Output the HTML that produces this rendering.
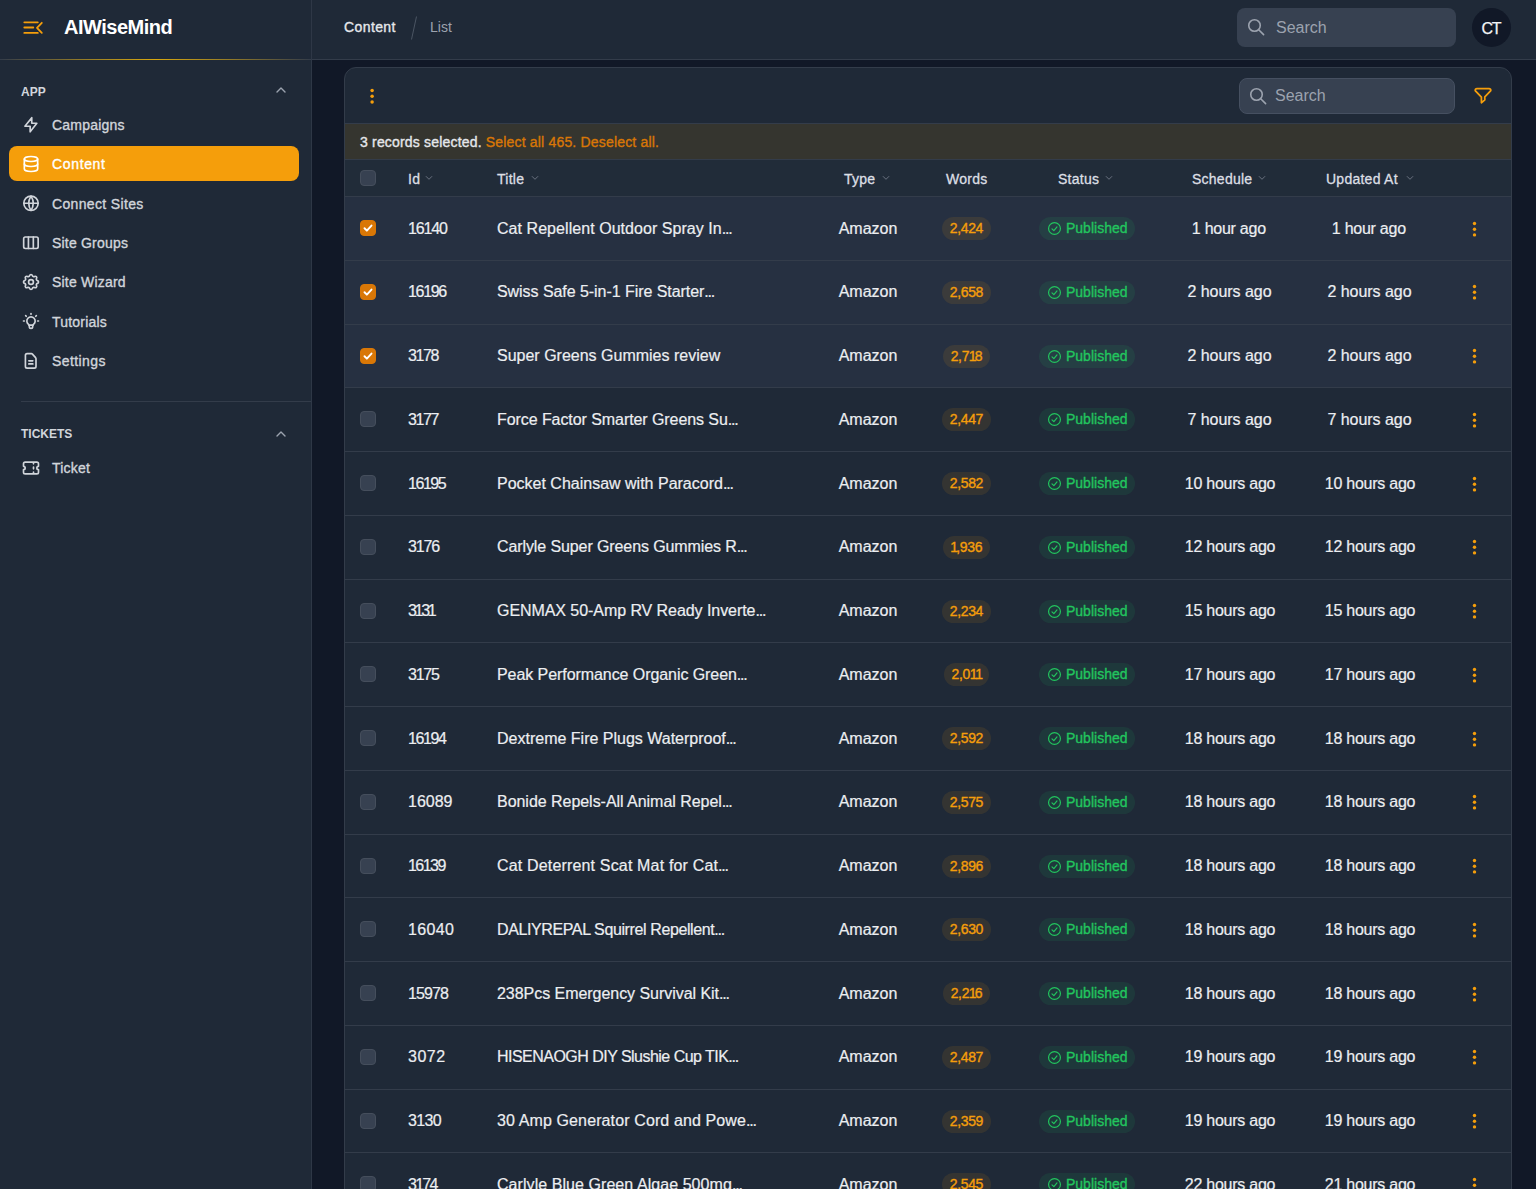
<!DOCTYPE html><html><head><meta charset="utf-8"><style>*{box-sizing:border-box;margin:0;padding:0}
html,body{width:1536px;height:1189px;overflow:hidden;background:#111827;font-family:"Liberation Sans",sans-serif;color:#f3f4f6}
.abs{position:absolute}
#sb{position:absolute;left:0;top:0;width:312px;height:1189px;background:#1f2937;border-right:1px solid #2e3746}
#sbh{position:absolute;left:0;top:0;width:311px;height:60px;border-bottom:1px solid #333c4a}
#sbh .grad{position:absolute;left:0;top:59px;width:311px;height:1px;background:linear-gradient(90deg,rgba(234,179,8,0) 0%,rgba(234,179,8,0.5) 25%,rgba(234,179,8,0.9) 50%,rgba(234,179,8,0.5) 75%,rgba(234,179,8,0) 100%)}
.logo{position:absolute;left:64px;top:14px;height:26px;line-height:26px;font-size:20px;font-weight:700;color:#fff;letter-spacing:-0.5px}
.grp{position:absolute;left:21px;font-size:12px;font-weight:700;color:#d1d5db;height:16px;line-height:16px;letter-spacing:0}
.chev{position:absolute;left:276px;width:10px;height:6px}
.nav{position:absolute;left:9px;width:290px;height:35px;border-radius:8px;color:#d1d5db}
.nav svg{position:absolute;left:12px;top:7.5px;width:20px;height:20px}
.nav span{position:absolute;left:43px;top:1px;height:35px;line-height:35px;font-size:14px;font-weight:400;letter-spacing:0.2px;-webkit-text-stroke:0.35px currentColor}
.nav.act{background:#f59e0b;color:#fff}
#top{position:absolute;left:312px;top:0;width:1224px;height:60px;background:#1f2937;border-bottom:1px solid #333c4a}
.bc{position:absolute;top:17px;height:20px;line-height:20px;font-size:14px}
.search{position:absolute;border-radius:8px;background:#374151}
.search svg{position:absolute}
.search span{position:absolute;font-size:16px;color:#9ca3af}
#card{position:absolute;left:344px;top:67px;width:1168px;height:1200px;background:#1f2937;border:1px solid #333c4a;border-radius:12px;overflow:hidden}
#selbar{position:absolute;left:0;top:55px;width:1166px;height:36px;background:#35352f;border-top:1px solid #333c4a}
#selbar span{position:absolute;left:15px;top:8px;height:20px;line-height:20px;font-size:14px;letter-spacing:0.18px;-webkit-text-stroke:0.35px currentColor}
#selbar b{font-weight:400}
#thead{position:absolute;left:0;top:91px;width:1166px;height:37px;background:#212c39;border-top:1px solid #333c4a}
.th{position:absolute;top:0.5px;height:36px;line-height:36px;font-size:14px;font-weight:400;-webkit-text-stroke:0.3px currentColor;letter-spacing:0.25px;color:#dcdfe4}
.cb{position:absolute;left:15px;width:16px;height:16px;border-radius:4px;background:#374151;border:1px solid #454e5c}
.cb.on{background:#d97706;border-color:#d97706}
.row{position:absolute;left:0;width:1166px;height:64.75px;border-top:1px solid #333c4a}
.row.sel{background:#263041}
.td{position:absolute;top:-0.5px;height:63px;line-height:63px;font-size:16px;color:#eceef1;white-space:nowrap;-webkit-text-stroke:0.2px currentColor}
.td.c{text-align:center}
.badge{position:absolute;top:20px;height:23px;line-height:23px;border-radius:12px;font-size:14px;text-align:center;-webkit-text-stroke:0.35px currentColor}
.bw{position:relative;top:0;display:inline-block;padding:0 8px;letter-spacing:-0.35px;background:rgba(245,158,11,0.1);color:#f59e0b}
.bs{background:rgba(34,197,94,0.1);color:#22c55e;text-align:left}

.ell{letter-spacing:-1.2px}

.n1{letter-spacing:-1.9px;margin-left:-0.3px}
</style></head><body>
<div id="sb"><div id="sbh"><div class="grad"></div>
<svg class="abs" style="left:20px;top:18px" width="26" height="20" viewBox="0 0 26 20" fill="none" stroke="#f59e0b" stroke-width="1.8" stroke-linecap="round" stroke-linejoin="round"><path d="M4.3 4.3h13.5M4.3 9.5h9M4.3 14.9h13.5M21.8 4.8l-4.8 5 4.8 5"/></svg>
<div class="logo">AIWiseMind</div></div>
<div class="grp" style="top:84px">APP</div>
<svg class="chev" style="top:87px" viewBox="0 0 10 6" fill="none" stroke="#9ca3af" stroke-width="1.4" stroke-linecap="round" stroke-linejoin="round"><path d="M1 5l4-4 4 4"/></svg>
<div class="nav" style="top:107.00px"><svg viewBox="0 0 24 24" fill="none" stroke="currentColor" stroke-width="2" stroke-linecap="round" stroke-linejoin="round"><path d="M12.9 3.2V9.9H19L11 20.2V13.5H4.7L12.9 3.2Z"/></svg><span>Campaigns</span></div>
<div class="nav act" style="top:146.37px"><svg viewBox="0 0 24 24" fill="none" stroke="currentColor" stroke-width="2" stroke-linecap="round" stroke-linejoin="round"><ellipse cx="12" cy="6" rx="8" ry="3"/><path d="M4 6v6a8 3 0 0 0 16 0V6"/><path d="M4 12v6a8 3 0 0 0 16 0v-6"/></svg><span style="letter-spacing:0.65px">Content</span></div>
<div class="nav" style="top:185.74px"><svg viewBox="0 0 24 24" fill="none" stroke="currentColor" stroke-width="2" stroke-linecap="round" stroke-linejoin="round"><circle cx="12" cy="12.3" r="8.6"/><path d="M12 3.7a16 16 0 0 0 0 17.2a16 16 0 0 0 0-17.2"/><path d="M3.4 12.3h17.2"/></svg><span style="letter-spacing:0.35px">Connect Sites</span></div>
<div class="nav" style="top:225.11px"><svg viewBox="0 0 24 24" fill="none" stroke="currentColor" stroke-width="2" stroke-linecap="round" stroke-linejoin="round"><rect x="3.2" y="4.8" width="17.4" height="13.8" rx="2"/><path d="M8.9 4.8v13.8M14.8 4.8v13.8"/></svg><span>Site Groups</span></div>
<div class="nav" style="top:264.48px"><svg viewBox="0 0 24 24" fill="none" stroke="currentColor" stroke-width="2" stroke-linecap="round" stroke-linejoin="round"><path d="M10.325 4.317c.426-1.756 2.924-1.756 3.35 0a1.724 1.724 0 0 0 2.573 1.066c1.543-.94 3.31.826 2.37 2.37a1.724 1.724 0 0 0 1.065 2.572c1.756.426 1.756 2.924 0 3.35a1.724 1.724 0 0 0-1.066 2.573c.94 1.543-.826 3.31-2.37 2.37a1.724 1.724 0 0 0-2.572 1.065c-.426 1.756-2.924 1.756-3.35 0a1.724 1.724 0 0 0-2.573-1.066c-1.543.94-3.31-.826-2.37-2.37a1.724 1.724 0 0 0-1.065-2.572c-1.756-.426-1.756-2.924 0-3.35a1.724 1.724 0 0 0 1.066-2.573c-.94-1.543.826-3.31 2.37-2.37c1 .608 2.296.07 2.572-1.065z"/><circle cx="12" cy="12" r="2.9"/></svg><span>Site Wizard</span></div>
<div class="nav" style="top:303.85px"><svg viewBox="0 0 24 24" fill="none" stroke="currentColor" stroke-width="2" stroke-linecap="round" stroke-linejoin="round"><path d="M3 12h1m8-9v1m8 8h1M5.6 5.6l.7.7m12.1-.7l-.7.7"/><path d="M9 16a5 5 0 1 1 6 0a3.5 3.5 0 0 0-1 3a2 2 0 0 1-4 0a3.5 3.5 0 0 0-1-3"/><path d="M9.7 17h4.6"/></svg><span>Tutorials</span></div>
<div class="nav" style="top:343.22px"><svg viewBox="0 0 24 24" fill="none" stroke="currentColor" stroke-width="2" stroke-linecap="round" stroke-linejoin="round"><path d="M7.3 3.2H12.6Q13.2 3.2 13.7 3.7L17.5 8Q18 8.6 18 9.2V18.6a2 2 0 0 1-2 2H7.3a2 2 0 0 1-2-2V5.2a2 2 0 0 1 2-2z"/><path d="M9.4 11.8h4.8M9.4 15.5h4.8"/></svg><span style="letter-spacing:0.4px">Settings</span></div>
<div class="abs" style="left:21px;top:401px;width:290px;height:1px;background:#333c4a"></div>
<div class="grp" style="top:426px">TICKETS</div>
<svg class="chev" style="top:431px" viewBox="0 0 10 6" fill="none" stroke="#9ca3af" stroke-width="1.4" stroke-linecap="round" stroke-linejoin="round"><path d="M1 5l4-4 4 4"/></svg>
<div class="nav" style="top:450px"><svg viewBox="0 0 24 24" fill="none" stroke="currentColor" stroke-width="2" stroke-linecap="round" stroke-linejoin="round"><path d="M15 5v2M15 11v2M15 17v2M5 5h14a2 2 0 0 1 2 2v3a2 2 0 0 0 0 4v3a2 2 0 0 1-2 2H5a2 2 0 0 1-2-2v-3a2 2 0 0 0 0-4V7a2 2 0 0 1 2-2"/></svg><span>Ticket</span></div>
</div>
<div id="top">
<div class="bc" style="left:32px;color:#e5e7eb;-webkit-text-stroke:0.35px #e5e7eb;letter-spacing:0.4px">Content</div>
<svg class="abs" style="left:98px;top:16px" width="8" height="24"><path d="M6.5 0.5L1.5 23.5" stroke="#4b5563" stroke-width="1"/></svg>
<div class="bc" style="left:118px;color:#9ca3af">List</div>
<div class="search" style="left:925px;top:8px;width:219px;height:39px"><svg style="left:9px;top:9.3px" viewBox="0 0 20 20" width="20" height="20" fill="none" stroke="#9ca3af" stroke-width="1.6" stroke-linecap="round"><circle cx="8.5" cy="8.5" r="5.75"/><path d="M12.7 12.7L17.6 17.6"/></svg><span style="left:39px;top:10px;line-height:20px">Search</span></div>
<div class="abs" style="left:1160px;top:8.4px;width:39px;height:39px;border-radius:50%;background:#111827;color:#f3f4f6;font-size:16px;line-height:41px;text-align:center;letter-spacing:-1.2px;text-indent:-1.2px;-webkit-text-stroke:0.25px #f3f4f6">CT</div>
</div>
<div id="card">
<svg class="abs" style="left:24px;top:19.5px" width="6" height="17" viewBox="0 0 6 17" fill="#f59e0b"><circle cx="3.1" cy="2.5" r="1.75"/><circle cx="3.1" cy="8.2" r="1.75"/><circle cx="3.1" cy="13.9" r="1.75"/></svg>
<div class="search" style="left:894px;top:10px;width:216px;height:36px;border:1px solid #465061"><svg style="left:7.5px;top:7px" viewBox="0 0 20 20" width="20" height="20" fill="none" stroke="#9ca3af" stroke-width="1.6" stroke-linecap="round"><circle cx="8.5" cy="8.5" r="5.75"/><path d="M12.7 12.7L17.6 17.6"/></svg><span style="left:35px;top:7px;line-height:20px">Search</span></div>
<svg class="abs" style="left:1123px;top:14px" width="30" height="26" viewBox="0 0 30 26" fill="none" stroke="#f59e0b" stroke-width="1.75" stroke-linecap="round" stroke-linejoin="round"><path d="M9 6.6H21Q22.8 6.6 22.8 8.4V8.6L16.8 14.9V17.9L13.4 20.8V15.2L7.2 8.6V8.4Q7.2 6.6 9 6.6Z"/></svg>
<div id="selbar"><span><b style="color:#e5e7eb">3 records selected.</b> <b style="color:#d97706">Select all 465.</b> <b style="color:#d97706">Deselect all.</b></span></div>
<div id="thead">
<div class="cb" style="top:10px"></div>
<div class="th" style="left:63px">Id</div>
<svg class="abs" style="left:80px;top:15px" width="8" height="6" viewBox="0 0 8 6" fill="none" stroke="#6b7280" stroke-width="1" stroke-linecap="round" stroke-linejoin="round"><path d="M1.2 1.5l2.8 2.8 2.8-2.8"/></svg>
<div class="th" style="left:152px">Title</div>
<svg class="abs" style="left:185.5px;top:15px" width="8" height="6" viewBox="0 0 8 6" fill="none" stroke="#6b7280" stroke-width="1" stroke-linecap="round" stroke-linejoin="round"><path d="M1.2 1.5l2.8 2.8 2.8-2.8"/></svg>
<div class="th" style="left:499px">Type</div>
<svg class="abs" style="left:537px;top:15px" width="8" height="6" viewBox="0 0 8 6" fill="none" stroke="#6b7280" stroke-width="1" stroke-linecap="round" stroke-linejoin="round"><path d="M1.2 1.5l2.8 2.8 2.8-2.8"/></svg>
<div class="th" style="left:601px">Words</div>
<div class="th" style="left:713px">Status</div>
<svg class="abs" style="left:760.4px;top:15px" width="8" height="6" viewBox="0 0 8 6" fill="none" stroke="#6b7280" stroke-width="1" stroke-linecap="round" stroke-linejoin="round"><path d="M1.2 1.5l2.8 2.8 2.8-2.8"/></svg>
<div class="th" style="left:847px">Schedule</div>
<svg class="abs" style="left:913px;top:15px" width="8" height="6" viewBox="0 0 8 6" fill="none" stroke="#6b7280" stroke-width="1" stroke-linecap="round" stroke-linejoin="round"><path d="M1.2 1.5l2.8 2.8 2.8-2.8"/></svg>
<div class="th" style="left:981px">Updated At</div>
<svg class="abs" style="left:1061px;top:15px" width="8" height="6" viewBox="0 0 8 6" fill="none" stroke="#6b7280" stroke-width="1" stroke-linecap="round" stroke-linejoin="round"><path d="M1.2 1.5l2.8 2.8 2.8-2.8"/></svg>
</div>
<div class="row sel" style="top:128.00px">
<div class="cb on" style="top:23px"><svg viewBox="0 0 16 16" width="14" height="14" style="position:absolute;left:0;top:0" fill="none" stroke="#fff" stroke-width="2.2" stroke-linecap="round" stroke-linejoin="round"><path d="M4 8.3l2.7 2.7L12 5.2"/></svg></div>
<div class="td" style="left:63px;letter-spacing:-1.15px">16140</div>
<div class="td" style="left:152px;letter-spacing:0.053px">Cat Repellent Outdoor Spray In<span class="ell">...</span></div>
<div class="td c" style="left:463px;width:120px">Amazon</div>
<div class="abs" style="left:561.4px;top:20px;width:120px;text-align:center"><span class="badge bw">2,424</span></div>
<div class="badge bs" style="left:694px;width:96px"><svg class="abs" style="left:7.5px;top:4px" width="15" height="15" viewBox="0 0 24 24" fill="none" stroke="#22c55e" stroke-width="1.9" stroke-linecap="round" stroke-linejoin="round"><circle cx="12" cy="12" r="9.5"/><path d="M8 12.5l3 3 5-6"/></svg><span style="position:absolute;left:27px">Published</span></div>
<div class="td c" style="left:823.8px;width:120px;letter-spacing:-0.25px">1 hour ago</div>
<div class="td c" style="left:963.8px;width:120px;letter-spacing:-0.25px">1 hour ago</div>
<svg class="abs" style="left:1127.4px;top:23.5px" width="5" height="17" viewBox="0 0 5 17" fill="#f59e0b"><circle cx="2.5" cy="2.5" r="1.7"/><circle cx="2.5" cy="8.2" r="1.7"/><circle cx="2.5" cy="13.9" r="1.7"/></svg>
</div>
<div class="row sel" style="top:191.75px">
<div class="cb on" style="top:23px"><svg viewBox="0 0 16 16" width="14" height="14" style="position:absolute;left:0;top:0" fill="none" stroke="#fff" stroke-width="2.2" stroke-linecap="round" stroke-linejoin="round"><path d="M4 8.3l2.7 2.7L12 5.2"/></svg></div>
<div class="td" style="left:63px;letter-spacing:-1.325px">16196</div>
<div class="td" style="left:152px;letter-spacing:-0.056px">Swiss Safe 5-in-1 Fire Starter<span class="ell">...</span></div>
<div class="td c" style="left:463px;width:120px">Amazon</div>
<div class="abs" style="left:561.4px;top:20px;width:120px;text-align:center"><span class="badge bw">2,658</span></div>
<div class="badge bs" style="left:694px;width:96px"><svg class="abs" style="left:7.5px;top:4px" width="15" height="15" viewBox="0 0 24 24" fill="none" stroke="#22c55e" stroke-width="1.9" stroke-linecap="round" stroke-linejoin="round"><circle cx="12" cy="12" r="9.5"/><path d="M8 12.5l3 3 5-6"/></svg><span style="position:absolute;left:27px">Published</span></div>
<div class="td c" style="left:824.5px;width:120px;letter-spacing:-0.05px">2 hours ago</div>
<div class="td c" style="left:964.5px;width:120px;letter-spacing:-0.05px">2 hours ago</div>
<svg class="abs" style="left:1127.4px;top:23.5px" width="5" height="17" viewBox="0 0 5 17" fill="#f59e0b"><circle cx="2.5" cy="2.5" r="1.7"/><circle cx="2.5" cy="8.2" r="1.7"/><circle cx="2.5" cy="13.9" r="1.7"/></svg>
</div>
<div class="row sel" style="top:255.50px">
<div class="cb on" style="top:23px"><svg viewBox="0 0 16 16" width="14" height="14" style="position:absolute;left:0;top:0" fill="none" stroke="#fff" stroke-width="2.2" stroke-linecap="round" stroke-linejoin="round"><path d="M4 8.3l2.7 2.7L12 5.2"/></svg></div>
<div class="td" style="left:63px;letter-spacing:-1.4px">3178</div>
<div class="td" style="left:152px;letter-spacing:0.000px">Super Greens Gummies review</div>
<div class="td c" style="left:463px;width:120px">Amazon</div>
<div class="abs" style="left:561.4px;top:20px;width:120px;text-align:center"><span class="badge bw">2,7<span class="n1">1</span>8</span></div>
<div class="badge bs" style="left:694px;width:96px"><svg class="abs" style="left:7.5px;top:4px" width="15" height="15" viewBox="0 0 24 24" fill="none" stroke="#22c55e" stroke-width="1.9" stroke-linecap="round" stroke-linejoin="round"><circle cx="12" cy="12" r="9.5"/><path d="M8 12.5l3 3 5-6"/></svg><span style="position:absolute;left:27px">Published</span></div>
<div class="td c" style="left:824.5px;width:120px;letter-spacing:-0.05px">2 hours ago</div>
<div class="td c" style="left:964.5px;width:120px;letter-spacing:-0.05px">2 hours ago</div>
<svg class="abs" style="left:1127.4px;top:23.5px" width="5" height="17" viewBox="0 0 5 17" fill="#f59e0b"><circle cx="2.5" cy="2.5" r="1.7"/><circle cx="2.5" cy="8.2" r="1.7"/><circle cx="2.5" cy="13.9" r="1.7"/></svg>
</div>
<div class="row" style="top:319.25px">
<div class="cb" style="top:23px"></div>
<div class="td" style="left:63px;letter-spacing:-1.433px">3177</div>
<div class="td" style="left:152px;letter-spacing:-0.072px">Force Factor Smarter Greens Su<span class="ell">...</span></div>
<div class="td c" style="left:463px;width:120px">Amazon</div>
<div class="abs" style="left:561.4px;top:20px;width:120px;text-align:center"><span class="badge bw">2,447</span></div>
<div class="badge bs" style="left:694px;width:96px"><svg class="abs" style="left:7.5px;top:4px" width="15" height="15" viewBox="0 0 24 24" fill="none" stroke="#22c55e" stroke-width="1.9" stroke-linecap="round" stroke-linejoin="round"><circle cx="12" cy="12" r="9.5"/><path d="M8 12.5l3 3 5-6"/></svg><span style="position:absolute;left:27px">Published</span></div>
<div class="td c" style="left:824.5px;width:120px;letter-spacing:-0.05px">7 hours ago</div>
<div class="td c" style="left:964.5px;width:120px;letter-spacing:-0.05px">7 hours ago</div>
<svg class="abs" style="left:1127.4px;top:23.5px" width="5" height="17" viewBox="0 0 5 17" fill="#f59e0b"><circle cx="2.5" cy="2.5" r="1.7"/><circle cx="2.5" cy="8.2" r="1.7"/><circle cx="2.5" cy="13.9" r="1.7"/></svg>
</div>
<div class="row" style="top:383.00px">
<div class="cb" style="top:23px"></div>
<div class="td" style="left:63px;letter-spacing:-1.45px">16195</div>
<div class="td" style="left:152px;letter-spacing:0.000px">Pocket Chainsaw with Paracord<span class="ell">...</span></div>
<div class="td c" style="left:463px;width:120px">Amazon</div>
<div class="abs" style="left:561.4px;top:20px;width:120px;text-align:center"><span class="badge bw">2,582</span></div>
<div class="badge bs" style="left:694px;width:96px"><svg class="abs" style="left:7.5px;top:4px" width="15" height="15" viewBox="0 0 24 24" fill="none" stroke="#22c55e" stroke-width="1.9" stroke-linecap="round" stroke-linejoin="round"><circle cx="12" cy="12" r="9.5"/><path d="M8 12.5l3 3 5-6"/></svg><span style="position:absolute;left:27px">Published</span></div>
<div class="td c" style="left:825px;width:120px;letter-spacing:-0.25px">10 hours ago</div>
<div class="td c" style="left:965px;width:120px;letter-spacing:-0.25px">10 hours ago</div>
<svg class="abs" style="left:1127.4px;top:23.5px" width="5" height="17" viewBox="0 0 5 17" fill="#f59e0b"><circle cx="2.5" cy="2.5" r="1.7"/><circle cx="2.5" cy="8.2" r="1.7"/><circle cx="2.5" cy="13.9" r="1.7"/></svg>
</div>
<div class="row" style="top:446.75px">
<div class="cb" style="top:23px"></div>
<div class="td" style="left:63px;letter-spacing:-1.133px">3176</div>
<div class="td" style="left:152px;letter-spacing:-0.100px">Carlyle Super Greens Gummies R<span class="ell">...</span></div>
<div class="td c" style="left:463px;width:120px">Amazon</div>
<div class="abs" style="left:561.4px;top:20px;width:120px;text-align:center"><span class="badge bw"><span class="n1">1</span>,936</span></div>
<div class="badge bs" style="left:694px;width:96px"><svg class="abs" style="left:7.5px;top:4px" width="15" height="15" viewBox="0 0 24 24" fill="none" stroke="#22c55e" stroke-width="1.9" stroke-linecap="round" stroke-linejoin="round"><circle cx="12" cy="12" r="9.5"/><path d="M8 12.5l3 3 5-6"/></svg><span style="position:absolute;left:27px">Published</span></div>
<div class="td c" style="left:825px;width:120px;letter-spacing:-0.25px">12 hours ago</div>
<div class="td c" style="left:965px;width:120px;letter-spacing:-0.25px">12 hours ago</div>
<svg class="abs" style="left:1127.4px;top:23.5px" width="5" height="17" viewBox="0 0 5 17" fill="#f59e0b"><circle cx="2.5" cy="2.5" r="1.7"/><circle cx="2.5" cy="8.2" r="1.7"/><circle cx="2.5" cy="13.9" r="1.7"/></svg>
</div>
<div class="row" style="top:510.50px">
<div class="cb" style="top:23px"></div>
<div class="td" style="left:63px;letter-spacing:-2.3px">3131</div>
<div class="td" style="left:152px;letter-spacing:-0.062px">GENMAX 50-Amp RV Ready Inverte<span class="ell">...</span></div>
<div class="td c" style="left:463px;width:120px">Amazon</div>
<div class="abs" style="left:561.4px;top:20px;width:120px;text-align:center"><span class="badge bw">2,234</span></div>
<div class="badge bs" style="left:694px;width:96px"><svg class="abs" style="left:7.5px;top:4px" width="15" height="15" viewBox="0 0 24 24" fill="none" stroke="#22c55e" stroke-width="1.9" stroke-linecap="round" stroke-linejoin="round"><circle cx="12" cy="12" r="9.5"/><path d="M8 12.5l3 3 5-6"/></svg><span style="position:absolute;left:27px">Published</span></div>
<div class="td c" style="left:825px;width:120px;letter-spacing:-0.25px">15 hours ago</div>
<div class="td c" style="left:965px;width:120px;letter-spacing:-0.25px">15 hours ago</div>
<svg class="abs" style="left:1127.4px;top:23.5px" width="5" height="17" viewBox="0 0 5 17" fill="#f59e0b"><circle cx="2.5" cy="2.5" r="1.7"/><circle cx="2.5" cy="8.2" r="1.7"/><circle cx="2.5" cy="13.9" r="1.7"/></svg>
</div>
<div class="row" style="top:574.25px">
<div class="cb" style="top:23px"></div>
<div class="td" style="left:63px;letter-spacing:-1.267px">3175</div>
<div class="td" style="left:152px;letter-spacing:-0.069px">Peak Performance Organic Green<span class="ell">...</span></div>
<div class="td c" style="left:463px;width:120px">Amazon</div>
<div class="abs" style="left:561.4px;top:20px;width:120px;text-align:center"><span class="badge bw">2,0<span class="n1">1</span><span class="n1">1</span></span></div>
<div class="badge bs" style="left:694px;width:96px"><svg class="abs" style="left:7.5px;top:4px" width="15" height="15" viewBox="0 0 24 24" fill="none" stroke="#22c55e" stroke-width="1.9" stroke-linecap="round" stroke-linejoin="round"><circle cx="12" cy="12" r="9.5"/><path d="M8 12.5l3 3 5-6"/></svg><span style="position:absolute;left:27px">Published</span></div>
<div class="td c" style="left:825px;width:120px;letter-spacing:-0.25px">17 hours ago</div>
<div class="td c" style="left:965px;width:120px;letter-spacing:-0.25px">17 hours ago</div>
<svg class="abs" style="left:1127.4px;top:23.5px" width="5" height="17" viewBox="0 0 5 17" fill="#f59e0b"><circle cx="2.5" cy="2.5" r="1.7"/><circle cx="2.5" cy="8.2" r="1.7"/><circle cx="2.5" cy="13.9" r="1.7"/></svg>
</div>
<div class="row" style="top:638.00px">
<div class="cb" style="top:23px"></div>
<div class="td" style="left:63px;letter-spacing:-1.4px">16194</div>
<div class="td" style="left:152px;letter-spacing:0.000px">Dextreme Fire Plugs Waterproof<span class="ell">...</span></div>
<div class="td c" style="left:463px;width:120px">Amazon</div>
<div class="abs" style="left:561.4px;top:20px;width:120px;text-align:center"><span class="badge bw">2,592</span></div>
<div class="badge bs" style="left:694px;width:96px"><svg class="abs" style="left:7.5px;top:4px" width="15" height="15" viewBox="0 0 24 24" fill="none" stroke="#22c55e" stroke-width="1.9" stroke-linecap="round" stroke-linejoin="round"><circle cx="12" cy="12" r="9.5"/><path d="M8 12.5l3 3 5-6"/></svg><span style="position:absolute;left:27px">Published</span></div>
<div class="td c" style="left:825px;width:120px;letter-spacing:-0.25px">18 hours ago</div>
<div class="td c" style="left:965px;width:120px;letter-spacing:-0.25px">18 hours ago</div>
<svg class="abs" style="left:1127.4px;top:23.5px" width="5" height="17" viewBox="0 0 5 17" fill="#f59e0b"><circle cx="2.5" cy="2.5" r="1.7"/><circle cx="2.5" cy="8.2" r="1.7"/><circle cx="2.5" cy="13.9" r="1.7"/></svg>
</div>
<div class="row" style="top:701.75px">
<div class="cb" style="top:23px"></div>
<div class="td" style="left:63px;letter-spacing:0.0px">16089</div>
<div class="td" style="left:152px;letter-spacing:-0.037px">Bonide Repels-All Animal Repel<span class="ell">...</span></div>
<div class="td c" style="left:463px;width:120px">Amazon</div>
<div class="abs" style="left:561.4px;top:20px;width:120px;text-align:center"><span class="badge bw">2,575</span></div>
<div class="badge bs" style="left:694px;width:96px"><svg class="abs" style="left:7.5px;top:4px" width="15" height="15" viewBox="0 0 24 24" fill="none" stroke="#22c55e" stroke-width="1.9" stroke-linecap="round" stroke-linejoin="round"><circle cx="12" cy="12" r="9.5"/><path d="M8 12.5l3 3 5-6"/></svg><span style="position:absolute;left:27px">Published</span></div>
<div class="td c" style="left:825px;width:120px;letter-spacing:-0.25px">18 hours ago</div>
<div class="td c" style="left:965px;width:120px;letter-spacing:-0.25px">18 hours ago</div>
<svg class="abs" style="left:1127.4px;top:23.5px" width="5" height="17" viewBox="0 0 5 17" fill="#f59e0b"><circle cx="2.5" cy="2.5" r="1.7"/><circle cx="2.5" cy="8.2" r="1.7"/><circle cx="2.5" cy="13.9" r="1.7"/></svg>
</div>
<div class="row" style="top:765.50px">
<div class="cb" style="top:23px"></div>
<div class="td" style="left:63px;letter-spacing:-1.525px">16139</div>
<div class="td" style="left:152px;letter-spacing:0.166px">Cat Deterrent Scat Mat for Cat<span class="ell">...</span></div>
<div class="td c" style="left:463px;width:120px">Amazon</div>
<div class="abs" style="left:561.4px;top:20px;width:120px;text-align:center"><span class="badge bw">2,896</span></div>
<div class="badge bs" style="left:694px;width:96px"><svg class="abs" style="left:7.5px;top:4px" width="15" height="15" viewBox="0 0 24 24" fill="none" stroke="#22c55e" stroke-width="1.9" stroke-linecap="round" stroke-linejoin="round"><circle cx="12" cy="12" r="9.5"/><path d="M8 12.5l3 3 5-6"/></svg><span style="position:absolute;left:27px">Published</span></div>
<div class="td c" style="left:825px;width:120px;letter-spacing:-0.25px">18 hours ago</div>
<div class="td c" style="left:965px;width:120px;letter-spacing:-0.25px">18 hours ago</div>
<svg class="abs" style="left:1127.4px;top:23.5px" width="5" height="17" viewBox="0 0 5 17" fill="#f59e0b"><circle cx="2.5" cy="2.5" r="1.7"/><circle cx="2.5" cy="8.2" r="1.7"/><circle cx="2.5" cy="13.9" r="1.7"/></svg>
</div>
<div class="row" style="top:829.25px">
<div class="cb" style="top:23px"></div>
<div class="td" style="left:63px;letter-spacing:0.325px">16040</div>
<div class="td" style="left:152px;letter-spacing:-0.387px">DALIYREPAL Squirrel Repellent<span class="ell">...</span></div>
<div class="td c" style="left:463px;width:120px">Amazon</div>
<div class="abs" style="left:561.4px;top:20px;width:120px;text-align:center"><span class="badge bw">2,630</span></div>
<div class="badge bs" style="left:694px;width:96px"><svg class="abs" style="left:7.5px;top:4px" width="15" height="15" viewBox="0 0 24 24" fill="none" stroke="#22c55e" stroke-width="1.9" stroke-linecap="round" stroke-linejoin="round"><circle cx="12" cy="12" r="9.5"/><path d="M8 12.5l3 3 5-6"/></svg><span style="position:absolute;left:27px">Published</span></div>
<div class="td c" style="left:825px;width:120px;letter-spacing:-0.25px">18 hours ago</div>
<div class="td c" style="left:965px;width:120px;letter-spacing:-0.25px">18 hours ago</div>
<svg class="abs" style="left:1127.4px;top:23.5px" width="5" height="17" viewBox="0 0 5 17" fill="#f59e0b"><circle cx="2.5" cy="2.5" r="1.7"/><circle cx="2.5" cy="8.2" r="1.7"/><circle cx="2.5" cy="13.9" r="1.7"/></svg>
</div>
<div class="row" style="top:893.00px">
<div class="cb" style="top:23px"></div>
<div class="td" style="left:63px;letter-spacing:-0.9px">15978</div>
<div class="td" style="left:152px;letter-spacing:-0.042px">238Pcs Emergency Survival Kit<span class="ell">...</span></div>
<div class="td c" style="left:463px;width:120px">Amazon</div>
<div class="abs" style="left:561.4px;top:20px;width:120px;text-align:center"><span class="badge bw">2,2<span class="n1">1</span>6</span></div>
<div class="badge bs" style="left:694px;width:96px"><svg class="abs" style="left:7.5px;top:4px" width="15" height="15" viewBox="0 0 24 24" fill="none" stroke="#22c55e" stroke-width="1.9" stroke-linecap="round" stroke-linejoin="round"><circle cx="12" cy="12" r="9.5"/><path d="M8 12.5l3 3 5-6"/></svg><span style="position:absolute;left:27px">Published</span></div>
<div class="td c" style="left:825px;width:120px;letter-spacing:-0.25px">18 hours ago</div>
<div class="td c" style="left:965px;width:120px;letter-spacing:-0.25px">18 hours ago</div>
<svg class="abs" style="left:1127.4px;top:23.5px" width="5" height="17" viewBox="0 0 5 17" fill="#f59e0b"><circle cx="2.5" cy="2.5" r="1.7"/><circle cx="2.5" cy="8.2" r="1.7"/><circle cx="2.5" cy="13.9" r="1.7"/></svg>
</div>
<div class="row" style="top:956.75px">
<div class="cb" style="top:23px"></div>
<div class="td" style="left:63px;letter-spacing:0.533px">3072</div>
<div class="td" style="left:152px;letter-spacing:-0.526px">HISENAOGH DIY Slushie Cup TIK<span class="ell">...</span></div>
<div class="td c" style="left:463px;width:120px">Amazon</div>
<div class="abs" style="left:561.4px;top:20px;width:120px;text-align:center"><span class="badge bw">2,487</span></div>
<div class="badge bs" style="left:694px;width:96px"><svg class="abs" style="left:7.5px;top:4px" width="15" height="15" viewBox="0 0 24 24" fill="none" stroke="#22c55e" stroke-width="1.9" stroke-linecap="round" stroke-linejoin="round"><circle cx="12" cy="12" r="9.5"/><path d="M8 12.5l3 3 5-6"/></svg><span style="position:absolute;left:27px">Published</span></div>
<div class="td c" style="left:825px;width:120px;letter-spacing:-0.25px">19 hours ago</div>
<div class="td c" style="left:965px;width:120px;letter-spacing:-0.25px">19 hours ago</div>
<svg class="abs" style="left:1127.4px;top:23.5px" width="5" height="17" viewBox="0 0 5 17" fill="#f59e0b"><circle cx="2.5" cy="2.5" r="1.7"/><circle cx="2.5" cy="8.2" r="1.7"/><circle cx="2.5" cy="13.9" r="1.7"/></svg>
</div>
<div class="row" style="top:1020.50px">
<div class="cb" style="top:23px"></div>
<div class="td" style="left:63px;letter-spacing:-0.667px">3130</div>
<div class="td" style="left:152px;letter-spacing:0.119px">30 Amp Generator Cord and Powe<span class="ell">...</span></div>
<div class="td c" style="left:463px;width:120px">Amazon</div>
<div class="abs" style="left:561.4px;top:20px;width:120px;text-align:center"><span class="badge bw">2,359</span></div>
<div class="badge bs" style="left:694px;width:96px"><svg class="abs" style="left:7.5px;top:4px" width="15" height="15" viewBox="0 0 24 24" fill="none" stroke="#22c55e" stroke-width="1.9" stroke-linecap="round" stroke-linejoin="round"><circle cx="12" cy="12" r="9.5"/><path d="M8 12.5l3 3 5-6"/></svg><span style="position:absolute;left:27px">Published</span></div>
<div class="td c" style="left:825px;width:120px;letter-spacing:-0.25px">19 hours ago</div>
<div class="td c" style="left:965px;width:120px;letter-spacing:-0.25px">19 hours ago</div>
<svg class="abs" style="left:1127.4px;top:23.5px" width="5" height="17" viewBox="0 0 5 17" fill="#f59e0b"><circle cx="2.5" cy="2.5" r="1.7"/><circle cx="2.5" cy="8.2" r="1.7"/><circle cx="2.5" cy="13.9" r="1.7"/></svg>
</div>
<div class="row" style="top:1084.25px">
<div class="cb" style="top:23px"></div>
<div class="td" style="left:63px;letter-spacing:-1.767px">3174</div>
<div class="td" style="left:152px;letter-spacing:0.062px">Carlyle Blue Green Algae 500mg<span class="ell">...</span></div>
<div class="td c" style="left:463px;width:120px">Amazon</div>
<div class="abs" style="left:561.4px;top:20px;width:120px;text-align:center"><span class="badge bw">2,545</span></div>
<div class="badge bs" style="left:694px;width:96px"><svg class="abs" style="left:7.5px;top:4px" width="15" height="15" viewBox="0 0 24 24" fill="none" stroke="#22c55e" stroke-width="1.9" stroke-linecap="round" stroke-linejoin="round"><circle cx="12" cy="12" r="9.5"/><path d="M8 12.5l3 3 5-6"/></svg><span style="position:absolute;left:27px">Published</span></div>
<div class="td c" style="left:825px;width:120px;letter-spacing:-0.25px">22 hours ago</div>
<div class="td c" style="left:965px;width:120px;letter-spacing:-0.25px">21 hours ago</div>
<svg class="abs" style="left:1127.4px;top:23.5px" width="5" height="17" viewBox="0 0 5 17" fill="#f59e0b"><circle cx="2.5" cy="2.5" r="1.7"/><circle cx="2.5" cy="8.2" r="1.7"/><circle cx="2.5" cy="13.9" r="1.7"/></svg>
</div>
</div>
</body></html>
